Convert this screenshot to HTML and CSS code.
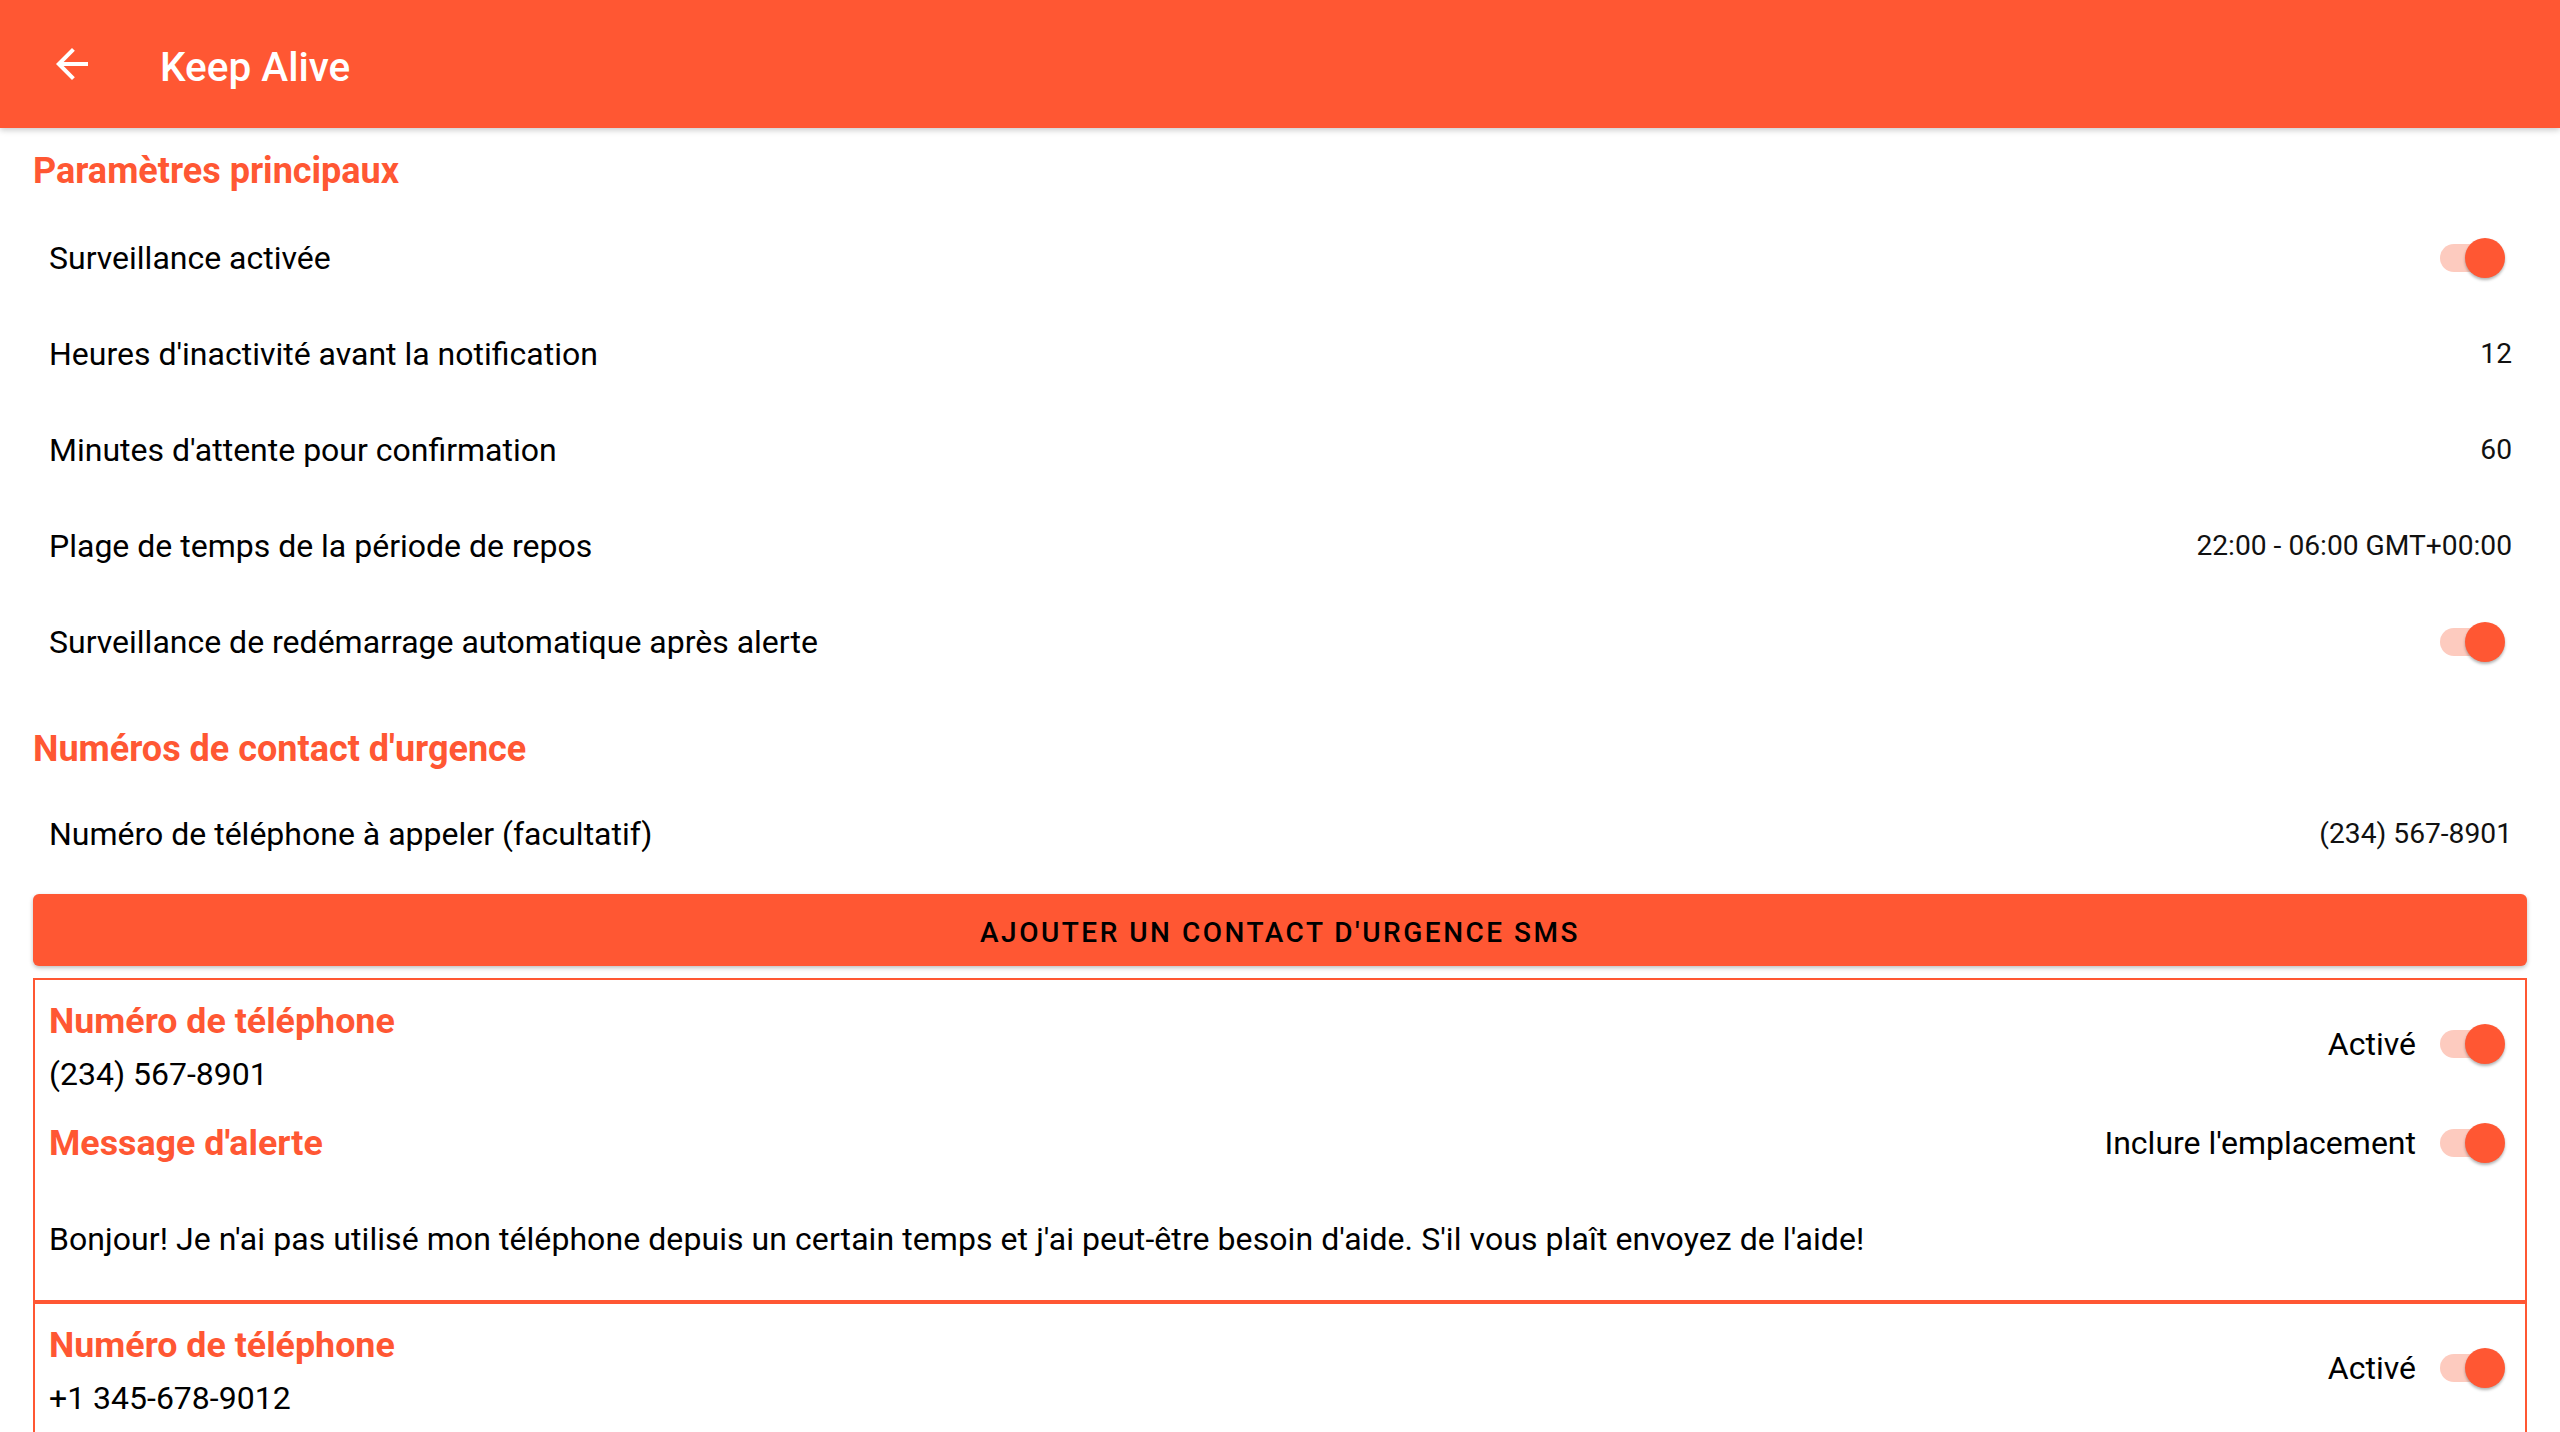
FILE: index.html
```html
<!DOCTYPE html>
<html lang="fr">
<head>
<meta charset="utf-8">
<title>Keep Alive</title>
<link rel="stylesheet" href="styles.css">
</head>
<body>
<header class="appbar">
  <span class="nav-icon" aria-label="Retour">
    <svg viewBox="0 0 24 24" width="48" height="48"><path fill="#fff" d="M20 11H7.83l5.59-5.59L12 4l-8 8 8 8 1.41-1.41L7.83 13H20v-2z"/></svg>
  </span>
  <h1 class="appbar-title">Keep Alive</h1>
</header>
<main class="content">
  <section class="group">
    <h2 class="group-title first">Paramètres principaux</h2>
    <div class="pref">
      <span class="pref-label">Surveillance activée</span>
      <span class="switch"><span class="track"></span><span class="thumb"></span></span>
    </div>
    <div class="pref">
      <span class="pref-label">Heures d'inactivité avant la notification</span>
      <span class="pref-value">12</span>
    </div>
    <div class="pref">
      <span class="pref-label">Minutes d'attente pour confirmation</span>
      <span class="pref-value">60</span>
    </div>
    <div class="pref">
      <span class="pref-label">Plage de temps de la période de repos</span>
      <span class="pref-value">22:00 - 06:00 GMT+00:00</span>
    </div>
    <div class="pref">
      <span class="pref-label">Surveillance de redémarrage automatique après alerte</span>
      <span class="switch"><span class="track"></span><span class="thumb"></span></span>
    </div>
  </section>
  <section class="group">
    <h2 class="group-title second">Numéros de contact d'urgence</h2>
    <div class="pref">
      <span class="pref-label">Numéro de téléphone à appeler (facultatif)</span>
      <span class="pref-value">(234) 567-8901</span>
    </div>
  </section>
  <button class="add-btn" type="button">Ajouter un contact d'urgence SMS</button>
  <div class="contact-card">
    <div class="card-row">
      <div class="card-col">
        <div class="card-title">Numéro de téléphone</div>
        <div class="card-phone">(234) 567-8901</div>
      </div>
      <div class="card-toggle enabled">
        <span class="toggle-label">Activé</span>
        <span class="switch"><span class="track"></span><span class="thumb"></span></span>
      </div>
    </div>
    <div class="card-row msg-head">
      <div class="card-title">Message d'alerte</div>
      <div class="card-toggle">
        <span class="toggle-label">Inclure l'emplacement</span>
        <span class="switch"><span class="track"></span><span class="thumb"></span></span>
      </div>
    </div>
    <div class="card-message">Bonjour! Je n'ai pas utilisé mon téléphone depuis un certain temps et j'ai peut-être besoin d'aide. S'il vous plaît envoyez de l'aide!</div>
  </div>
  <div class="contact-card">
    <div class="card-row">
      <div class="card-col">
        <div class="card-title">Numéro de téléphone</div>
        <div class="card-phone">+1 345-678-9012</div>
      </div>
      <div class="card-toggle enabled">
        <span class="toggle-label">Activé</span>
        <span class="switch"><span class="track"></span><span class="thumb"></span></span>
      </div>
    </div>
  </div>
</main>
</body>
</html>
```
FILE: styles.css
```css
* { box-sizing: border-box; }
html, body {
  margin: 0;
  padding: 0;
  width: 2560px;
  height: 1432px;
  overflow: hidden;
  background: #fff;
  font-family: Roboto, "Noto Sans", "Liberation Sans", sans-serif;
  color: #000;
}
.appbar {
  position: relative;
  z-index: 2;
  height: 128px;
  background: #ff5733;
  display: flex;
  align-items: center;
  box-shadow: 0 2px 6px rgba(0,0,0,0.22);
}
.nav-icon {
  display: flex;
  width: 48px;
  height: 48px;
  margin-left: 48px;
}
.appbar-title {
  margin: 0 0 0 64px;
  padding-top: 6px;
  font-size: 40.5px;
  line-height: 48px;
  font-weight: 500;
  color: #fff;
}
.content {
  display: flex;
  flex-direction: column;
}
.group { display: flex; flex-direction: column; }
.group-title {
  margin: 0;
  padding-left: 33px;
  font-size: 36px;
  line-height: 40px;
  font-weight: 700;
  color: #ff5733;
}
.group-title.first { padding-top: 23px; padding-bottom: 19px; }
.group-title.second { padding-top: 39px; padding-bottom: 17px; }
.pref {
  height: 96px;
  display: flex;
  align-items: center;
  justify-content: space-between;
  padding: 0 48px 0 49px;
}
.pref-label {
  font-size: 32px;
  line-height: 40px;
}
.pref-value {
  font-size: 28.2px;
  line-height: 40px;
  color: #111;
}
.pref .switch { margin-right: 7px; }
.switch {
  position: relative;
  display: inline-block;
  flex: none;
  width: 65px;
  height: 40px;
}
.switch .track {
  position: absolute;
  left: 0;
  top: 6px;
  width: 60px;
  height: 28px;
  border-radius: 14px;
  background: #fdcbbf;
}
.switch .thumb {
  position: absolute;
  right: 0;
  top: 0;
  width: 40px;
  height: 40px;
  border-radius: 50%;
  background: #ff5733;
  box-shadow: 0 2px 3px rgba(0,0,0,0.3);
}
.add-btn {
  margin: 12px 33px 0;
  height: 72px;
  padding: 4px 0 0;
  border: none;
  border-radius: 6px;
  background: #ff5733;
  box-shadow: 0 2px 4px rgba(0,0,0,0.25);
  font-family: Roboto, "Noto Sans", sans-serif;
  font-size: 28px;
  font-weight: 500;
  letter-spacing: 2.5px;
  text-transform: uppercase;
  color: #000;
}
.contact-card {
  margin: 0 33px;
  border: 2px solid #ff5733;
  padding: 21px 20px 41px 14px;
  display: flex;
  flex-direction: column;
}
.add-btn + .contact-card { margin-top: 12px; }
.card-row {
  display: flex;
  align-items: center;
  justify-content: space-between;
}
.card-col { display: flex; flex-direction: column; }
.card-title {
  font-size: 35.8px;
  line-height: 40px;
  font-weight: 700;
  color: #ff5733;
}
.card-phone {
  margin-top: 13px;
  font-size: 32px;
  line-height: 40px;
}
.card-toggle {
  display: flex;
  align-items: center;
  gap: 24px;
}
.card-toggle.enabled { margin-bottom: 8px; }
.toggle-label {
  font-size: 32px;
  line-height: 40px;
}
.msg-head { margin-top: 29px; }
.card-message {
  margin-top: 56px;
  font-size: 32px;
  line-height: 40px;
  letter-spacing: 0.07px;
}
```
